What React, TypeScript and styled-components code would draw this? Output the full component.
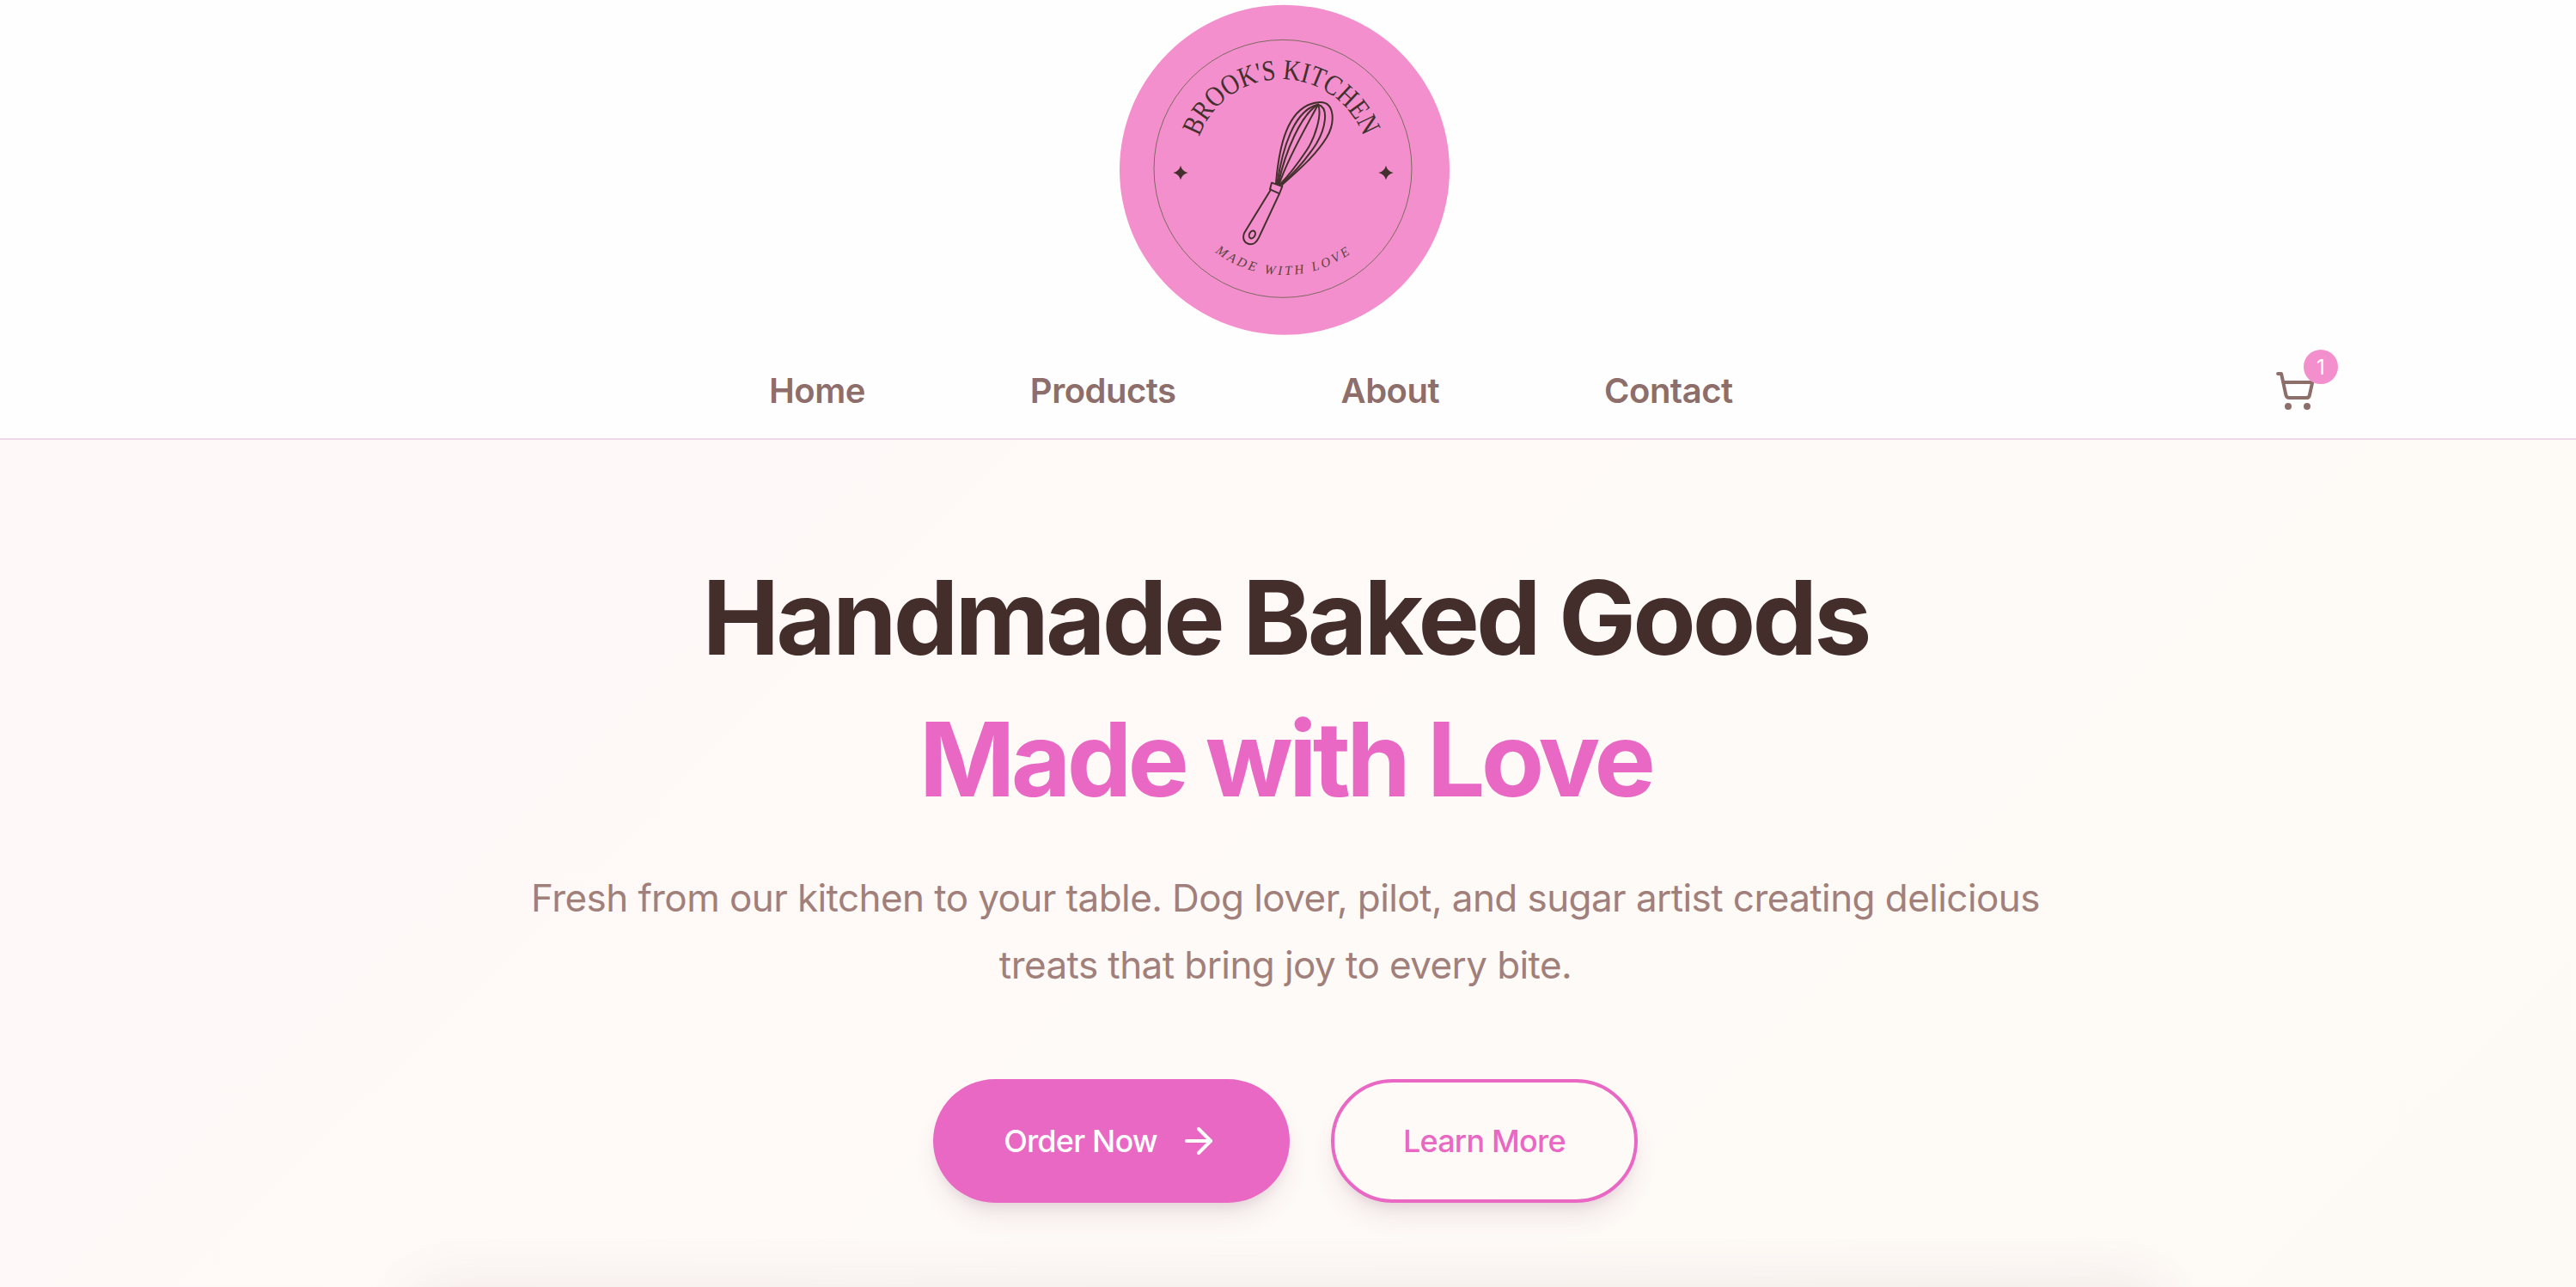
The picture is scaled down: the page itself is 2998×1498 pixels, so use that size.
import styled, { createGlobalStyle } from "styled-components";
import { ShoppingCart, ArrowRight } from "lucide-react";

const GlobalStyle = createGlobalStyle`
  html, body {
    margin: 0;
    padding: 0;
    height: 1498px;
    overflow: hidden;
    background: #fff;
    font-family: Inter, "Liberation Sans", sans-serif;
  }
`;

const Header = styled.header`
  background: #fffefe;
  border-bottom: 2px solid #eed7e6;
`;

const LogoRow = styled.div`
  display: flex;
  justify-content: center;
  height: 400px;
`;

const NavRow = styled.div`
  display: flex;
  align-items: center;
  height: 110px;
  padding: 0 303px 0 895px;
`;

const NavLinks = styled.nav`
  display: flex;
  gap: 192px;
`;

const NavLink = styled.a`
  color: #8d6e6a;
  font-size: 40px;
  font-weight: 600;
  line-height: 56px;
  letter-spacing: -0.5px;
  text-decoration: none;
`;

const CartButton = styled.div`
  position: relative;
  display: flex;
  margin-left: auto;
  color: #8d6e6a;
`;

const CartBadge = styled.span`
  position: absolute;
  top: -24px;
  right: -26px;
  display: flex;
  align-items: center;
  justify-content: center;
  width: 40px;
  height: 40px;
  border-radius: 50%;
  background: #f48fce;
  color: #fff;
  font-size: 24px;
`;

const Hero = styled.section`
  display: flex;
  flex-direction: column;
  align-items: center;
  height: 986px;
  padding: 124px 6px 0 0;
  box-sizing: border-box;
  background: linear-gradient(135deg, #fef8f8 0%, #fefaf7 50%, #fdf9f4 100%);
`;

const Title = styled.h1`
  margin: 0;
  font-size: 120px;
  font-weight: 700;
  line-height: 165px;
  letter-spacing: -0.033em;
  color: #432e2c;
  text-align: center;
`;

const TitleAccent = styled.span`
  display: block;
  letter-spacing: -0.04em;
  color: #e868c4;
`;

const Lead = styled.p`
  width: 1800px;
  margin: 40px 0 0;
  font-size: 44px;
  line-height: 78px;
  letter-spacing: -0.58px;
  color: #a1807b;
  text-align: center;
`;

const Actions = styled.div`
  display: flex;
  gap: 48px;
  margin-top: 94px;
`;

const Pill = styled.a<{ $outline?: boolean }>`
  display: flex;
  align-items: center;
  justify-content: center;
  gap: 24px;
  box-sizing: border-box;
  height: 144px;
  padding: 0 ${(p) => (p.$outline ? "80px" : "82px")};
  border-radius: 72px;
  font-size: 36px;
  font-weight: 500;
  letter-spacing: -0.8px;
  text-decoration: none;
  color: ${(p) => (p.$outline ? "#e868c4" : "#fff")};
  background: ${(p) => (p.$outline ? "transparent" : "#e868c4")};
  border: ${(p) => (p.$outline ? "4px solid #e868c4" : "none")};
  box-shadow: 0 20px 30px -6px rgba(120, 60, 100, 0.12), 0 8px 12px -4px rgba(120, 60, 100, 0.1);
`;

const PreviewCard = styled.div`
  flex-shrink: 0;
  width: 2030px;
  height: 600px;
  margin-top: 100px;
  border-radius: 40px;
  background: #f3e8e8;
  box-shadow: 0 0 60px 10px rgba(120, 70, 90, 0.08);
`;

const Logo = () => (
  <svg width="440" height="400" viewBox="0 0 1320 1200" aria-label="Brook's Kitchen logo">
    <circle cx="648" cy="593" r="576" fill="#f48fce" />
    <circle cx="642" cy="589" r="450" fill="none" stroke="#7d6a5e" strokeWidth="3" />
    <defs>
      <path id="topArc" d="M 350 478 A 305 305 0 0 1 925 482" />
      <path id="bottomArc" d="M 405 880 A 400 400 0 0 0 885 880" />
    </defs>
    <text fontFamily="'Liberation Serif', serif" fontSize="100" fill="#43302c">
      <textPath href="#topArc" textLength="745" lengthAdjust="spacingAndGlyphs">
        BROOK'S KITCHEN
      </textPath>
    </text>
    <text fontFamily="'Liberation Serif', serif" fontStyle="italic" fontSize="46" fill="#5d4340">
      <textPath href="#bottomArc" textLength="505" lengthAdjust="spacing">
        MADE WITH LOVE
      </textPath>
    </text>
    <g fill="#43302c">
      <path d="M285 578 Q290 598 311 603 Q290 608 285 628 Q280 608 259 603 Q280 598 285 578Z" />
      <path d="M1002 578 Q1007 598 1028 603 Q1007 608 1002 628 Q997 608 976 603 Q997 598 1002 578Z" />
    </g>
    <g fill="none" stroke="#43302c" strokeWidth="6" strokeLinecap="round" strokeLinejoin="round">
      <path d="M618 640 C628 520 655 365 770 357 C825 355 825 430 795 480 C755 545 690 600 640 645" />
      <path d="M622 642 C640 520 680 385 765 365 C805 375 790 450 760 500 C725 555 680 605 636 644" />
      <path d="M626 642 C650 530 705 400 765 365 C780 400 755 480 725 525 C695 570 665 610 632 644" />
      <path d="M629 643 C660 550 725 440 765 365" />
      <path d="M603 638 L640 651 L630 676 L597 661 Z" />
      <path d="M600 662 L508 812 C498 835 510 852 530 853 C545 853 552 842 558 830 L630 676" />
      <ellipse cx="535" cy="819" rx="10" ry="14" transform="rotate(25 535 819)" />
    </g>
  </svg>
);

export default function App() {
  return (
    <>
      <GlobalStyle />
      <Header>
        <LogoRow>
          <Logo />
        </LogoRow>
        <NavRow>
          <NavLinks>
            <NavLink href="#home">Home</NavLink>
            <NavLink href="#products">Products</NavLink>
            <NavLink href="#about">About</NavLink>
            <NavLink href="#contact">Contact</NavLink>
          </NavLinks>
          <CartButton>
            <ShoppingCart size={48} strokeWidth={2} />
            <CartBadge>1</CartBadge>
          </CartButton>
        </NavRow>
      </Header>
      <Hero>
        <Title>
          Handmade Baked Goods
          <TitleAccent>Made with Love</TitleAccent>
        </Title>
        <Lead>
          Fresh from our kitchen to your table. Dog lover, pilot, and sugar artist creating delicious treats that bring
          joy to every bite.
        </Lead>
        <Actions>
          <Pill href="#order">
            Order Now
            <ArrowRight size={48} strokeWidth={2} />
          </Pill>
          <Pill href="#learn" $outline>
            Learn More
          </Pill>
        </Actions>
        <PreviewCard />
      </Hero>
    </>
  );
}
